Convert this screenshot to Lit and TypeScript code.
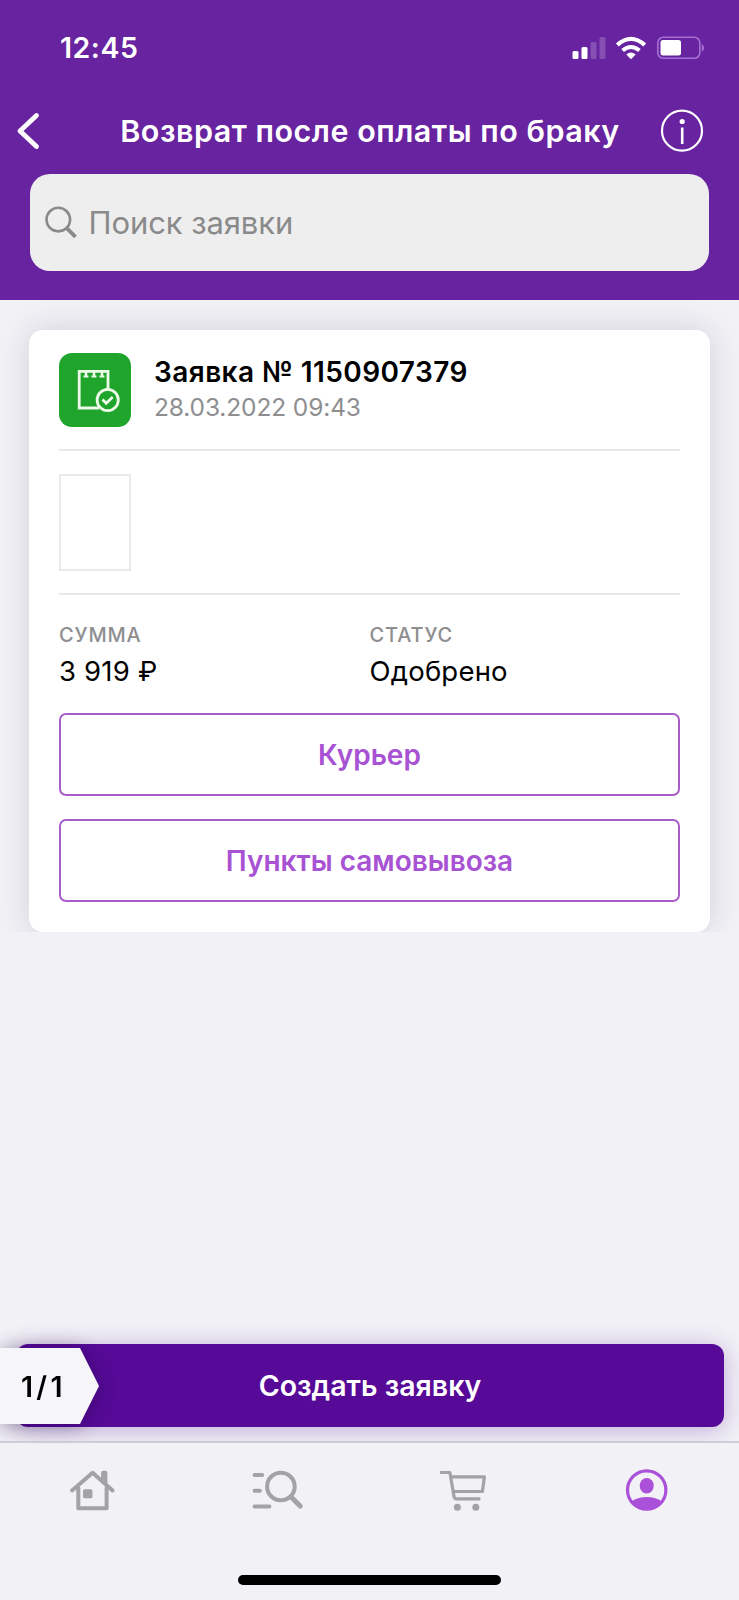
import { LitElement, html, css } from "lit";
import { customElement } from "lit/decorators.js";

@customElement("status-bar")
class StatusBar extends LitElement {
  static styles = css`
    :host { display: flex; justify-content: space-between; align-items: center; height: 95px; padding: 0 34px 0 60px; color: #fff; }
    .time { font-size: 28.5px; font-weight: 600; line-height: 34px; letter-spacing: 0.5px; }
    svg { display: block; }
  `;
  render() {
    return html`
      <span class="time">12:45</span>
      <svg width="134" height="28" viewBox="571 33 134 28" fill="#fff">
        <rect x="572.5" y="50" width="6" height="8" rx="1.5" />
        <rect x="581.5" y="46" width="6" height="12" rx="1.5" />
        <rect x="590.5" y="41" width="6" height="17" rx="1.5" opacity=".2" />
        <rect x="599.5" y="36" width="6" height="22" rx="1.5" opacity=".2" />
        <path d="M631 58.2 L626.3 53.4 Q631 49.6 635.7 53.4 Z" />
        <path d="M622.6 49.6 Q631 42.4 639.4 49.6" fill="none" stroke="#fff" stroke-width="4" />
        <path d="M617.3 44 Q631 31.8 644.7 44" fill="none" stroke="#fff" stroke-width="4.2" />
        <rect x="657.8" y="36.2" width="42" height="21" rx="5.5" fill="none" stroke="#b98be6" stroke-width="1.6" opacity=".75" />
        <rect x="660.5" y="39" width="20.5" height="15.4" rx="2.5" />
        <path d="M701.8 43 Q704 44.5 704 47 Q704 49.5 701.8 51 Z" fill="#b98be6" opacity=".8" />
      </svg>
    `;
  }
}

@customElement("page-header")
class PageHeader extends LitElement {
  static styles = css`
    :host { display: block; height: 300px; background: #6723a0; color: #fff; box-sizing: border-box; }
    .nav { display: grid; grid-template-columns: 90px 1fr 90px; align-items: center; height: 71px; }
    .nav svg { display: block; }
    .back { margin-left: 16px; }
    .info { margin-left: 11px; }
    .title { justify-self: center; padding: 1px 0 0 1px; font-size: 30.5px; line-height: 36px; font-weight: 600; letter-spacing: 0.5px; white-space: nowrap; }
    .search { display: flex; align-items: center; height: 97px; margin: 8px 30px 0; padding-left: 14px; gap: 10px; border-radius: 20px; background: #eeeeee; color: #8a8a8b; box-sizing: border-box; }
    .placeholder { font-size: 31px; line-height: 38px; letter-spacing: -0.08px; padding-left: 0.5px; }
  `;
  render() {
    return html`
      <status-bar></status-bar>
      <div class="nav">
        <svg class="back" width="26" height="38" viewBox="0 0 26 38"><path d="M20.5 3.5 L4 19 L20.5 34.5" fill="none" stroke="#fff" stroke-width="4.8" stroke-linecap="round" stroke-linejoin="round" /></svg>
        <span class="title">Возврат после оплаты по браку</span>
        <svg class="info" width="44" height="44" viewBox="0 0 44 44"><circle cx="22" cy="21.7" r="20" fill="none" stroke="#fff" stroke-width="2.2" /><circle cx="22.2" cy="12.5" r="2.6" fill="#fff" /><path d="M22.2 18.5 V35" stroke="#fff" stroke-width="2.6" /></svg>
      </div>
      <div class="search">
        <svg width="34" height="34" viewBox="0 0 34 34" fill="none" stroke="#8a8a8b"><circle cx="14.3" cy="13.6" r="11.8" stroke-width="2.6" /><path d="M22.5 21.8 L31.5 30.8" stroke-width="3.8" /></svg>
        <span class="placeholder">Поиск заявки</span>
      </div>
    `;
  }
}

@customElement("request-card")
class RequestCard extends LitElement {
  static styles = css`
    :host { display: flex; flex-direction: column; height: 602px; padding: 23px 30px 30px; box-sizing: border-box; background: #fff; border-radius: 14px; box-shadow: 0 0 32px rgba(40, 35, 60, 0.15); color: #000; }
    .head { display: flex; gap: 23px; height: 96px; border-bottom: 2px solid #e8e8e9; }
    .badge { display: block; flex: none; }
    .titles { display: flex; flex-direction: column; padding-top: 1px; }
    .number { font-size: 28px; line-height: 36px; font-weight: 600; letter-spacing: 0.43px; white-space: nowrap; }
    .date { font-size: 24.5px; line-height: 35px; letter-spacing: -0.13px; color: #8e8e90; white-space: nowrap; }
    .goods { padding: 23px 0 22px; border-bottom: 2px solid #e8e8e9; }
    .thumb { width: 72px; height: 97px; border: 2px solid #eaeaec; box-sizing: border-box; }
    .facts { display: grid; grid-template-columns: 1fr 1fr; padding-top: 26px; height: 92px; }
    .label { display: block; font-size: 20px; line-height: 28px; font-weight: 500; letter-spacing: 0.85px; color: #8e8e90; }
    .value { display: block; font-size: 27.5px; line-height: 36px; letter-spacing: 0.2px; margin-top: 4px; }
    .button { display: flex; align-items: center; justify-content: center; height: 83px; box-sizing: border-box; border: 2px solid #a95dca; border-radius: 7px; background: #fff; color: #a852d4; font-size: 28px; font-weight: 600; }
    .actions { display: flex; flex-direction: column; gap: 23px; }
  `;
  render() {
    return html`
      <div class="head">
        <svg class="badge" width="72" height="74" viewBox="0 0 72 74">
          <rect width="72" height="74" rx="13" fill="#1fa52c" />
          <g fill="none" stroke="#eefbe9" stroke-width="2.8">
            <path d="M49 36.5 V18.3 H20.2 V55 H40" />
            <circle cx="48.7" cy="47" r="10.6" />
            <path d="M43.5 46.6 L47.2 50.2 L53.7 44" />
            <path d="M27 19 V23.5 M35 19 V23.5 M43 19 V23.5" stroke-width="2.5" />
            <path d="M24.5 23.5 H29.5 M32.5 23.5 H37.5 M40.5 23.5 H45.5" stroke-width="2" />
          </g>
        </svg>
        <div class="titles">
          <span class="number">Заявка № 1150907379</span>
          <span class="date">28.03.2022 09:43</span>
        </div>
      </div>
      <div class="goods"><div class="thumb"></div></div>
      <div class="facts">
        <div><span class="label">СУММА</span><span class="value">3 919 ₽</span></div>
        <div><span class="label">СТАТУС</span><span class="value">Одобрено</span></div>
      </div>
      <div class="actions">
        <div class="button">Курьер</div>
        <div class="button">Пункты самовывоза</div>
      </div>
    `;
  }
}

@customElement("tab-bar")
class TabBar extends LitElement {
  static styles = css`
    :host { display: flex; flex-direction: column; align-items: center; position: relative; height: 159px; box-sizing: border-box; background: #f1f1f6; border-top: 2px solid #cfcbd7; }
    .tabs { display: grid; grid-template-columns: repeat(4, 1fr); width: 100%; padding-top: 22px; }
    .tabs svg { display: block; margin: 0 auto; }
    .home { width: 263px; height: 10px; margin-top: auto; margin-bottom: 15px; border-radius: 5px; background: #000; }
  `;
  render() {
    return html`
      <div class="tabs">
        <svg width="60" height="50" viewBox="62.4 1465 60 50" fill="none" stroke="#a3a3a5" stroke-width="4" stroke-linecap="round" stroke-linejoin="round">
          <path d="M72.5 1490.5 L93 1472.8 L113 1490.5" />
          <path d="M78.7 1488 V1508.3 H107 V1488" />
          <path d="M103.5 1472.8 H105.8 V1483 L103.5 1481 Z" />
          <rect x="83.5" y="1489.3" width="9.3" height="9" rx="1.5" fill="#a3a3a5" stroke="none" />
        </svg>
        <svg width="60" height="50" viewBox="247.1 1465 60 50" fill="none" stroke="#a3a3a5" stroke-width="4" stroke-linecap="round">
          <path d="M254.7 1475 H262.3 M254.7 1490.7 H260 M254.7 1506.5 H269.5" />
          <circle cx="281" cy="1486.5" r="13.8" />
          <path d="M291.5 1497.3 L300.3 1506" stroke-width="5" />
        </svg>
        <svg width="60" height="50" viewBox="431.9 1465 60 50" fill="none" stroke="#a3a3a5" stroke-width="3.2" stroke-linejoin="round">
          <path d="M440 1472.5 H449.8 L454 1497 Q454.6 1498.8 456.5 1498.8 H480.3" />
          <path d="M450.5 1476.8 H484.3 L482.3 1491.5 H453" />
          <circle cx="457.3" cy="1507.3" r="3.5" fill="#a3a3a5" stroke="none" />
          <circle cx="475.7" cy="1507.3" r="3.5" fill="#a3a3a5" stroke="none" />
        </svg>
        <svg width="60" height="50" viewBox="616.6 1465 60 50" fill="#ab50d8">
          <circle cx="646.3" cy="1490" r="19.2" fill="none" stroke="#ab50d8" stroke-width="3.2" />
          <ellipse cx="646.3" cy="1485.7" rx="7" ry="7.7" />
          <path d="M631.2 1501.5 Q637 1497 646.3 1497 Q655.6 1497 661.4 1501.5 Q655.5 1509.5 646.3 1509.5 Q637 1509.5 631.2 1501.5 Z" />
        </svg>
      </div>
      <div class="home"></div>
    `;
  }
}

@customElement("app-root")
class AppRoot extends LitElement {
  static styles = css`
    :host { display: flex; flex-direction: column; height: 1600px; overflow: hidden; background: #f1f1f6; font-family: Inter, "Liberation Sans", sans-serif; }
    .list { padding: 30px 29px 0; overflow: hidden; flex: none; }
    .space { flex: 1; }
    .footer { position: relative; padding: 0 15px 14px 16px; }
    .create { display: flex; align-items: center; justify-content: center; height: 83px; border-radius: 12px; background: #560a97; color: #fff; font-size: 28.5px; font-weight: 600; box-shadow: 0 3px 24px rgba(86, 10, 151, 0.3); }
    .counter { position: absolute; left: 0; top: 4px; width: 99px; height: 76px; filter: drop-shadow(0 2px 10px rgba(20, 0, 50, 0.4)); }
    .flag { display: flex; align-items: center; height: 76px; padding-left: 21px; box-sizing: border-box; background: #f6f6fa; clip-path: polygon(0 0, 80px 0, 99px 50%, 80px 100%, 0 100%); font-size: 28.5px; font-weight: 600; letter-spacing: 3.3px; color: #000; }
  `;
  render() {
    return html`
      <page-header></page-header>
      <div class="list"><request-card></request-card></div>
      <div class="space"></div>
      <div class="footer">
        <div class="create">Создать заявку</div>
        <div class="counter"><div class="flag">1/1</div></div>
      </div>
      <tab-bar></tab-bar>
    `;
  }
}
